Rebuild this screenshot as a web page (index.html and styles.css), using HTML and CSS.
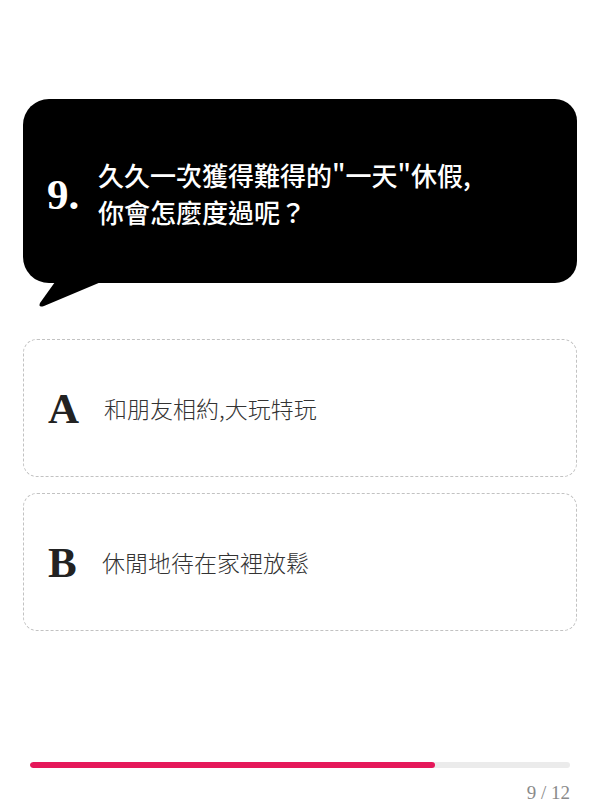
FILE: index.html
```html
<!DOCTYPE html>
<html lang="zh-Hant">
<head>
<meta charset="utf-8">
<link rel="stylesheet" href="styles.css">
</head>
<body>
<div class="page">
  <div class="bubble-wrap">
    <div class="bubble">
      <div class="qnum">9.</div>
      <div class="qtext">久久一次獲得難得的"一天"休假,<br>你會怎麼度過呢？</div>
    </div>
    <svg class="tail" width="80" height="30" viewBox="0 0 80 30">
      <path d="M32 0 L17 21 Q15 26 21 24 L78 0 Z" fill="#000"/>
    </svg>
  </div>
  <div class="options">
    <div class="option"><span class="letter">A</span><span class="otext">和朋友相約,大玩特玩</span></div>
    <div class="option"><span class="letter">B</span><span class="otext otext-b">休閒地待在家裡放鬆</span></div>
  </div>
  <div class="footer">
    <div class="track"><div class="fill" style="width:75%"></div></div>
    <div class="count">9 / 12</div>
  </div>
</div>
</body>
</html>
```
FILE: styles.css
```css
html, body { margin: 0; padding: 0; background: #fff; }
.page {
  width: 600px;
  height: 804px;
  box-sizing: border-box;
  padding: 99px 23px 0;
  display: flex;
  flex-direction: column;
  font-family: "Noto Sans CJK TC", "Noto Sans", sans-serif;
}
.bubble-wrap { position: relative; }
.bubble {
  background: #000;
  height: 184px;
  border-radius: 26px 22px 22px 26px;
  display: flex;
  align-items: center;
  padding-left: 24px;
  box-sizing: border-box;
  color: #fff;
}
.qnum {
  font-family: "Liberation Serif", serif;
  font-weight: 700;
  font-size: 43px;
  width: 51px;
  margin-top: 6px;
}
.qtext {
  font-size: 26px;
  font-weight: 500;
  line-height: 37px;
  margin-top: 4px;
}
.tail {
  position: absolute;
  left: 0;
  top: 183px;
  overflow: visible;
}
.options {
  margin-top: 56px;
  display: flex;
  flex-direction: column;
  gap: 16px;
}
.option {
  height: 138px;
  box-sizing: border-box;
  border: 1px dashed #c2c2c2;
  border-radius: 14px;
  display: flex;
  align-items: center;
  padding-left: 24px;
}
.letter {
  font-family: "Liberation Serif", serif;
  font-weight: 700;
  font-size: 43px;
  color: #222;
  width: 56px;
}
.otext {
  font-size: 23px;
  color: #333;
  font-weight: 300;
}
.otext-b { margin-left: -2px; }
.footer {
  margin-top: auto;
  padding: 0 7px 0;
}
.track {
  height: 6px;
  background: #ebebeb;
  border-radius: 3px;
  overflow: hidden;
}
.fill {
  height: 100%;
  background: #e5185a;
  border-radius: 3px;
}
.count {
  font-family: "Liberation Serif", serif;
  font-size: 19px;
  color: #8a8a8a;
  text-align: right;
  margin-top: 14px;
  margin-bottom: 0;
  line-height: 22px;
}
```
